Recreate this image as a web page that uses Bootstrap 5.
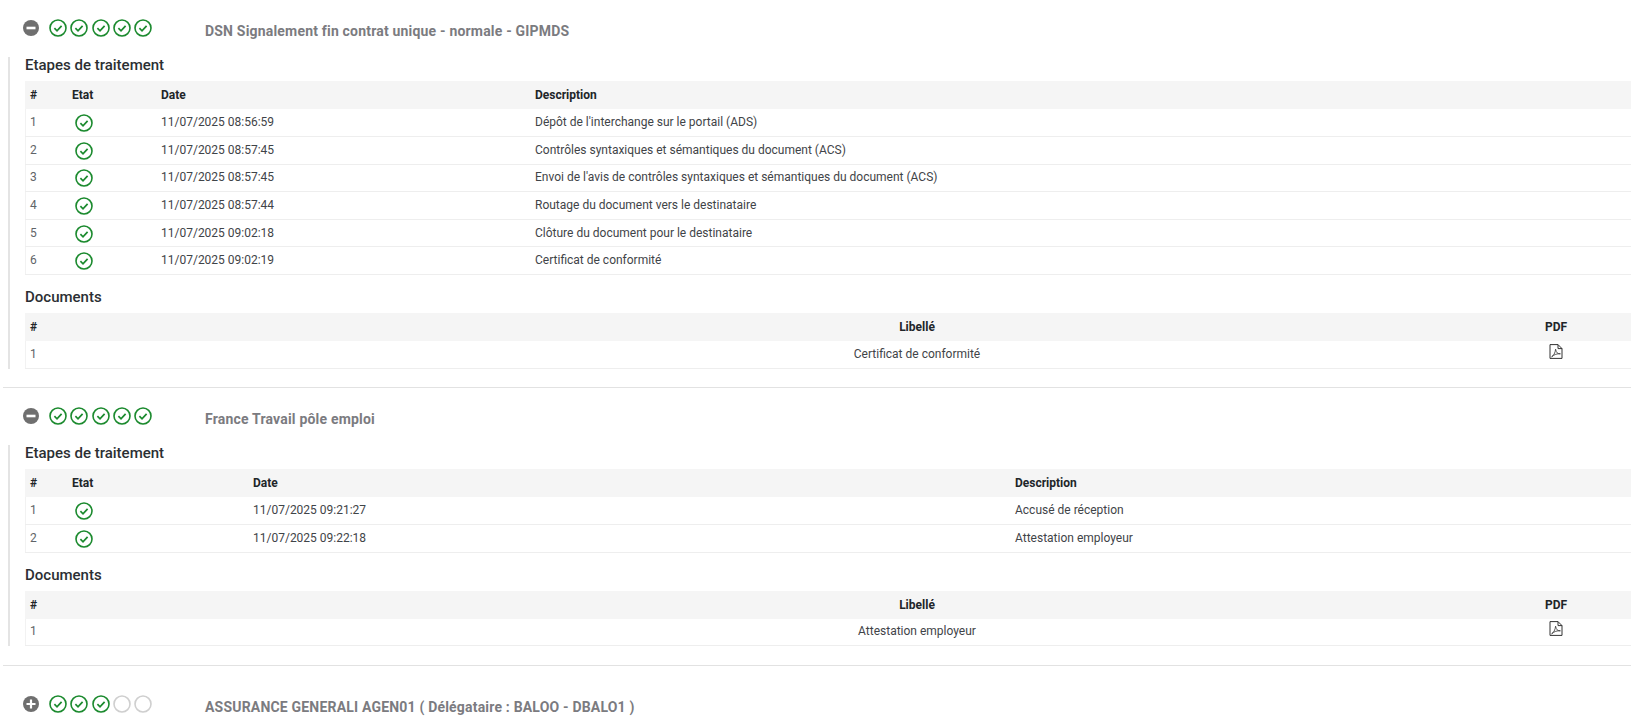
<!DOCTYPE html>
<html lang="fr">
<head>
<meta charset="utf-8">
<title>Suivi</title>
<link href="https://cdn.jsdelivr.net/npm/bootstrap@5.3.0/dist/css/bootstrap.min.css" rel="stylesheet">
<style>
body{font-family:Roboto,"Liberation Sans",sans-serif;font-size:12px;color:#495057;background:#fff;overflow:hidden;height:721px}
.sect{padding:18px 0 0 3px;height:387px}
.sect.two{height:277px}
.sect.three{padding-top:28px;height:56px}
.sect-head{height:30px;padding-left:20px}
.tog{width:16px;height:16px;margin-top:2px;flex:none}
.steps{gap:3.3px;margin-left:10px;margin-top:.5px;width:156px;flex:none}
.ck{width:18px;height:18px;flex:none;display:block}
.sect-title{font-size:14px;font-weight:700;color:#7b7b80;margin-top:2.5px;letter-spacing:.19px}
.detail{border-left:2px solid #e4e4e4;margin-left:5px;padding-left:15px;margin-top:9px}
.sub-h{font-size:15px;font-weight:500;color:#2b2f33;line-height:17px;margin:0}
.tbl{table-layout:fixed;font-size:12px;margin:7px 0 14px;width:1606px;min-width:1606px;color:#3f4448}
.tbl th{background:#f5f5f5;font-weight:700;color:#212529;padding:6px 5px;line-height:16px;border-bottom:0;height:28px}
.tbl td{padding:0 5px 1px;height:27.6px;line-height:16px;border-bottom:1px solid #eee;vertical-align:middle}
.tbl tbody td:first-child{box-shadow:inset 1px 0 0 #f2f2f2;color:#5f6468}
.tbl-doc{margin-bottom:0}
.tbl-doc td{height:27px}
.tbl th.etat{padding-left:6px}
.rowck{width:18px;height:18px;display:block;margin:2px 0 0 4px}
.pdf{width:14px;height:15px;display:block;margin:-5px auto 0}
.sep{border-top:1px solid #e2e2e2;margin:0 0 0 3px;opacity:1}
.w1{width:41px}.w2a{width:90px}.w2b{width:182px}.w3a{width:374px}.w3b{width:762px}
.wd1{width:328px}.wd2{width:1128px}.wd3{width:150px}
</style>
</head>
<body>
<svg width="0" height="0" class="d-block position-absolute">
<defs>
<symbol id="ok" viewBox="0 0 18 18"><circle cx="9" cy="9" r="8" fill="none" stroke="#1b8a2e" stroke-width="1.6"/><path d="M5.400 9.200l2.600 2.600 4.600-5" fill="none" stroke="#1b8a2e" stroke-width="1.700"/></symbol>
<symbol id="off" viewBox="0 0 18 18"><circle cx="9" cy="9" r="8" fill="none" stroke="#cfcfcf" stroke-width="1.6"/></symbol>
<symbol id="minus" viewBox="0 0 16 16"><circle cx="8" cy="8" r="8" fill="#6f6f6f"/><rect x="3.500" y="6.700" width="9" height="2.600" fill="#fff"/></symbol>
<symbol id="plus" viewBox="0 0 16 16"><circle cx="8" cy="8" r="8" fill="#6f6f6f"/><path d="M3.500 8h9M8 3.500v9" stroke="#fff" stroke-width="2.200"/></symbol>
<symbol id="pdf" viewBox="0 0 14 15"><path d="M1 .6h8l4 4v9.800H1z M9 .6v4h4" fill="none" stroke="#333" stroke-width="1"/><path d="M2.600 12.800c2-1 3.600-4 4-7.600.6 3.400 2 4.800 4.800 4.600-3-.4-6.400 .8-8.800 3z" fill="none" stroke="#333" stroke-width=".8"/></symbol>
</defs>
</svg>

<section class="sect">
  <div class="sect-head d-flex align-items-start">
    <svg class="tog"><use href="#minus"/></svg>
    <div class="steps d-flex">
      <svg class="ck"><use href="#ok"/></svg><svg class="ck"><use href="#ok"/></svg><svg class="ck"><use href="#ok"/></svg><svg class="ck"><use href="#ok"/></svg><svg class="ck"><use href="#ok"/></svg>
    </div>
    <div class="sect-title">DSN Signalement fin contrat unique - normale - GIPMDS</div>
  </div>
  <div class="detail">
    <h6 class="sub-h">Etapes de traitement</h6>
    <table class="table tbl">
      <colgroup><col class="w1"><col class="w2a"><col class="w3a"><col></colgroup>
      <thead><tr><th>#</th><th class="etat">Etat</th><th>Date</th><th>Description</th></tr></thead>
      <tbody>
        <tr><td>1</td><td><svg class="rowck"><use href="#ok"/></svg></td><td>11/07/2025 08:56:59</td><td>Dépôt de l'interchange sur le portail (ADS)</td></tr>
        <tr><td>2</td><td><svg class="rowck"><use href="#ok"/></svg></td><td>11/07/2025 08:57:45</td><td>Contrôles syntaxiques et sémantiques du document (ACS)</td></tr>
        <tr><td>3</td><td><svg class="rowck"><use href="#ok"/></svg></td><td>11/07/2025 08:57:45</td><td>Envoi de l'avis de contrôles syntaxiques et sémantiques du document (ACS)</td></tr>
        <tr><td>4</td><td><svg class="rowck"><use href="#ok"/></svg></td><td>11/07/2025 08:57:44</td><td>Routage du document vers le destinataire</td></tr>
        <tr><td>5</td><td><svg class="rowck"><use href="#ok"/></svg></td><td>11/07/2025 09:02:18</td><td>Clôture du document pour le destinataire</td></tr>
        <tr><td>6</td><td><svg class="rowck"><use href="#ok"/></svg></td><td>11/07/2025 09:02:19</td><td>Certificat de conformité</td></tr>
      </tbody>
    </table>
    <h6 class="sub-h">Documents</h6>
    <table class="table tbl tbl-doc">
      <colgroup><col class="wd1"><col class="wd2"><col class="wd3"></colgroup>
      <thead><tr><th>#</th><th class="text-center">Libellé</th><th class="text-center">PDF</th></tr></thead>
      <tbody><tr><td>1</td><td class="text-center">Certificat de conformité</td><td><svg class="pdf"><use href="#pdf"/></svg></td></tr></tbody>
    </table>
  </div>
</section>
<hr class="sep">
<section class="sect two">
  <div class="sect-head d-flex align-items-start">
    <svg class="tog"><use href="#minus"/></svg>
    <div class="steps d-flex">
      <svg class="ck"><use href="#ok"/></svg><svg class="ck"><use href="#ok"/></svg><svg class="ck"><use href="#ok"/></svg><svg class="ck"><use href="#ok"/></svg><svg class="ck"><use href="#ok"/></svg>
    </div>
    <div class="sect-title">France Travail pôle emploi</div>
  </div>
  <div class="detail">
    <h6 class="sub-h">Etapes de traitement</h6>
    <table class="table tbl">
      <colgroup><col class="w1"><col class="w2b"><col class="w3b"><col></colgroup>
      <thead><tr><th>#</th><th class="etat">Etat</th><th>Date</th><th>Description</th></tr></thead>
      <tbody>
        <tr><td>1</td><td><svg class="rowck"><use href="#ok"/></svg></td><td>11/07/2025 09:21:27</td><td>Accusé de réception</td></tr>
        <tr><td>2</td><td><svg class="rowck"><use href="#ok"/></svg></td><td>11/07/2025 09:22:18</td><td>Attestation employeur</td></tr>
      </tbody>
    </table>
    <h6 class="sub-h">Documents</h6>
    <table class="table tbl tbl-doc">
      <colgroup><col class="wd1"><col class="wd2"><col class="wd3"></colgroup>
      <thead><tr><th>#</th><th class="text-center">Libellé</th><th class="text-center">PDF</th></tr></thead>
      <tbody><tr><td>1</td><td class="text-center">Attestation employeur</td><td><svg class="pdf"><use href="#pdf"/></svg></td></tr></tbody>
    </table>
  </div>
</section>
<hr class="sep">
<section class="sect three">
  <div class="sect-head d-flex align-items-start">
    <svg class="tog"><use href="#plus"/></svg>
    <div class="steps d-flex">
      <svg class="ck"><use href="#ok"/></svg><svg class="ck"><use href="#ok"/></svg><svg class="ck"><use href="#ok"/></svg><svg class="ck"><use href="#off"/></svg><svg class="ck"><use href="#off"/></svg>
    </div>
    <div class="sect-title">ASSURANCE GENERALI AGEN01 ( Délégataire : BALOO - DBALO1 )</div>
  </div>
</section>
</body>
</html>
